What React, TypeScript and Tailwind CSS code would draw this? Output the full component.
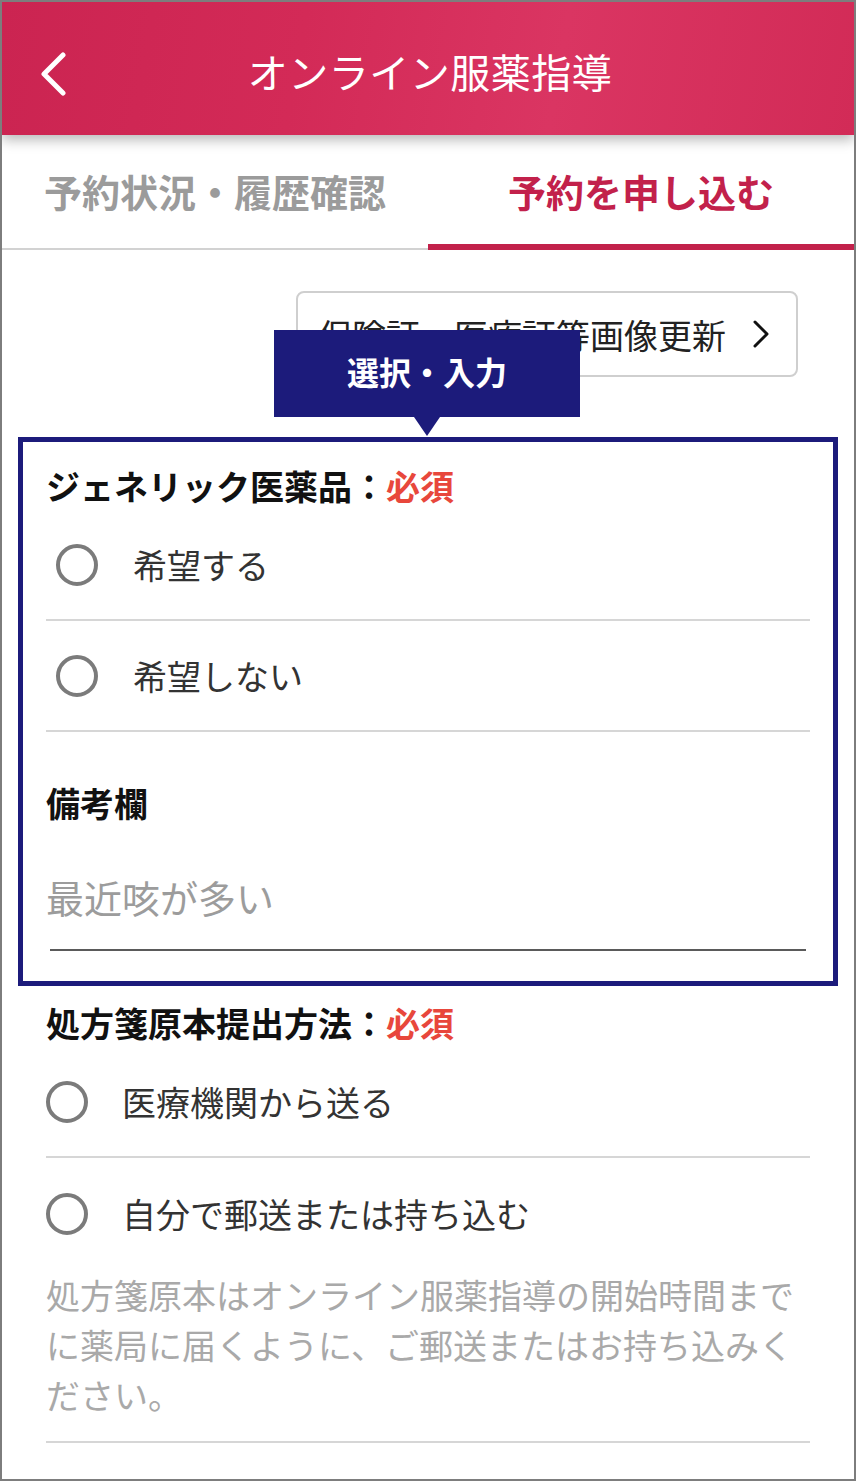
import React from 'react';

const Radio = () => (
  <span className="block w-[42px] h-[42px] shrink-0 rounded-full border-[4px] border-[#7b7b7b] bg-white" />
);

const Option = ({ label, inset }: { label: string; inset?: boolean }) => (
  <label
    className={`flex items-center h-[111px] border-b-2 border-[#d6d6d6] ${inset ? 'pl-[10px] gap-[35px]' : 'gap-[34px]'}`}
  >
    <Radio />
    <span className="text-[34px] leading-none text-[#333]">{label}</span>
  </label>
);

const Heading = ({ text, required }: { text: string; required?: boolean }) => (
  <h2 className="h-[48px] flex items-center text-[34px] font-bold leading-none text-[#111]">
    {text}
    {required && (
      <>
        <span>：</span>
        <span className="text-[#e8473c]">必須</span>
      </>
    )}
  </h2>
);

export default function App() {
  return (
    <div
      className="w-[856px] h-[1481px] overflow-hidden border-2 border-[#7d7d7d] bg-white"
      style={{ fontFamily: '"Noto Sans CJK JP", "Noto Sans", sans-serif' }}
    >
      {/* Header */}
      <header className="relative z-10 h-[133px] flex items-center bg-[linear-gradient(100deg,#cb2451_0%,#d32a57_35%,#da3562_65%,#d22b57_100%)] shadow-[0_5px_12px_rgba(0,0,0,0.28)]">
        <button className="absolute left-[34px] top-[49px] w-[34px] h-[46px] flex items-center justify-center">
          <svg width="28" height="44" viewBox="0 0 28 44" fill="none">
            <path d="M24 3 L5 22 L24 41" stroke="white" strokeWidth="5" strokeLinecap="round" strokeLinejoin="round" />
          </svg>
        </button>
        <h1 className="w-full pl-[4px] pt-[4px] text-center text-[40px] font-normal tracking-[0.5px] text-white">
          オンライン服薬指導
        </h1>
      </header>

      {/* Tabs */}
      <nav className="grid grid-cols-2 h-[115px]">
        <div className="flex flex-col">
          <div className="flex-1 flex items-center justify-center pt-[2px] text-[38px] font-bold text-[#9b9b9b]">
            予約状況・履歴確認
          </div>
          <div className="h-[6px] flex items-end">
            <div className="w-full h-[2px] bg-[#d2d2d2]" />
          </div>
        </div>
        <div className="flex flex-col">
          <div className="flex-1 flex items-center justify-center pt-[2px] text-[38px] font-bold text-[#c2214b]">
            予約を申し込む
          </div>
          <div className="h-[6px] bg-[#c2214b]" />
        </div>
      </nav>

      {/* Content */}
      <main className="relative">
        <div className="flex justify-end pt-[41px] pr-[56px]">
          <button className="h-[86px] w-[502px] flex items-center justify-between pl-[20px] pr-[26px] border-2 border-[#cfcfcf] rounded-[8px] text-[34px] text-[#222]">
            <span>保険証・医療証等画像更新</span>
            <svg width="18" height="28" viewBox="0 0 18 28" fill="none">
              <path d="M3 2 L15 14 L3 26" stroke="#111" strokeWidth="3" strokeLinecap="round" strokeLinejoin="round" />
            </svg>
          </button>
        </div>

        {/* Tooltip */}
        <div className="absolute left-[272px] top-[80px] z-20 flex flex-col items-center">
          <div className="w-[306px] h-[87px] flex items-center justify-center pb-[6px] bg-[#1c1b7b] text-white text-[32px] font-bold">
            選択・入力
          </div>
          <div className="w-0 h-0 border-l-[13px] border-r-[13px] border-t-[19px] border-l-transparent border-r-transparent border-t-[#1c1b7b]" />
        </div>

        {/* Highlighted section */}
        <section className="mt-[60px] mx-[16px] border-[5px] border-[#1c1b7b] px-[23px] pt-[20px] pb-[30px]">
          <Heading text="ジェネリック医薬品" required />
          <Option label="希望する" inset />
          <Option label="希望しない" inset />
          <h2 className="mt-[47px] h-[48px] flex items-center text-[34px] font-bold leading-none text-[#111]">
            備考欄
          </h2>
          <div className="mt-[46px] mx-[4px] pb-[28px] border-b-2 border-[#5a5a5a]">
            <div className="-ml-[4px] h-[48px] flex items-center text-[38px] leading-none text-[#9c9c9c]">
              最近咳が多い
            </div>
          </div>
        </section>

        {/* Prescription */}
        <section className="px-[44px] pt-[13px]">
          <Heading text="処方箋原本提出方法" required />
          <Option label="医療機関から送る" />
          <label className="flex items-center h-[112px] gap-[34px]">
            <Radio />
            <span className="text-[34px] leading-none text-[#333]">自分で郵送または持ち込む</span>
          </label>
          <p className="text-[34px] leading-[50px] text-[#a9a9a9] pb-[21px] border-b-2 border-[#d6d6d6]">
            処方箋原本はオンライン服薬指導の開始時間までに薬局に届くように、ご郵送またはお持ち込みください。
          </p>
        </section>
      </main>
    </div>
  );
}
